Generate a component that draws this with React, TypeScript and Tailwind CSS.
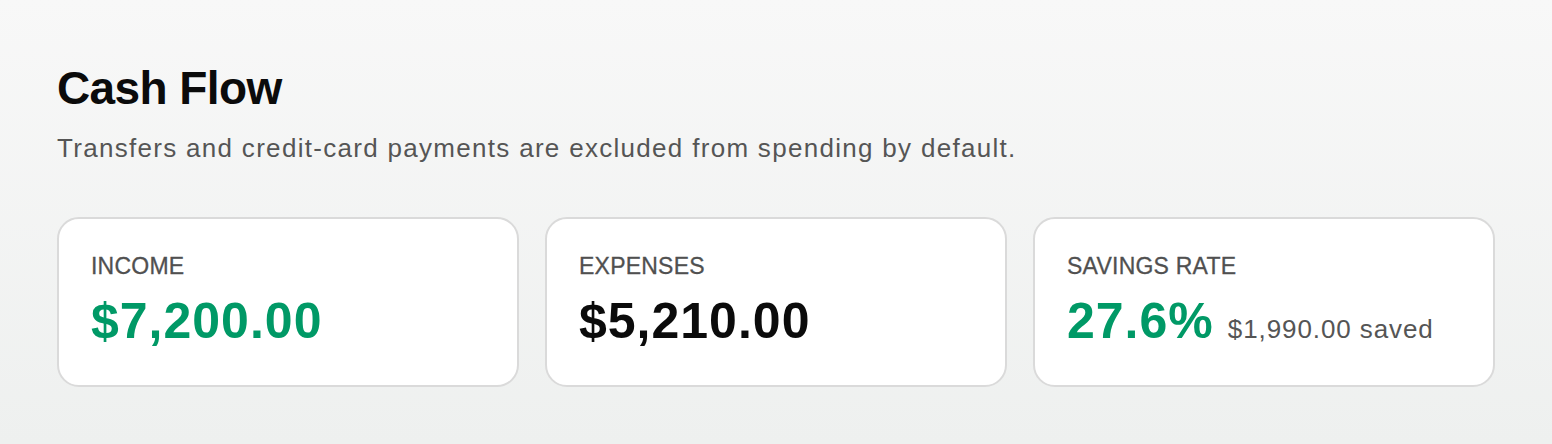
import React from "react";

const font = { fontFamily: "'Liberation Sans', Arial, sans-serif" };

type Stat = {
  label: string;
  value: string;
  tone: "green" | "dark";
  extra?: string;
};

const stats: Stat[] = [
  { label: "INCOME", value: "$7,200.00", tone: "green" },
  { label: "EXPENSES", value: "$5,210.00", tone: "dark" },
  { label: "SAVINGS RATE", value: "27.6%", tone: "green", extra: "$1,990.00 saved" },
];

const StatCard = ({ stat }: { stat: Stat }) => (
  <div className="bg-white border-2 border-[#dadada] rounded-[22px] h-[170px] px-[32px] pt-[33px]">
    <div className="text-[23px] leading-[28px] tracking-[0.01em] text-[#505050] [-webkit-text-stroke:0.3px_#505050]">
      {stat.label}
    </div>
    <div className="flex items-baseline gap-[14px] mt-[13px]">
      <span
        className={`text-[50px] leading-[56px] font-bold tracking-[0.02em] ${
          stat.tone === "green" ? "text-[#009966]" : "text-[#0b0b0b]"
        }`}
      >
        {stat.value}
      </span>
      {stat.extra && (
        <span className="text-[26px] leading-[32px] tracking-[0.035em] text-[#555555]">{stat.extra}</span>
      )}
    </div>
  </div>
);

export default function App() {
  return (
    <div
      className="w-full h-[444px] bg-gradient-to-b from-[#f8f8f8] to-[#eef0ef] px-[57px] pt-[61px]"
      style={font}
    >
      {/* header */}
      <h1 className="text-[46px] leading-[54px] font-bold tracking-[-0.6px] text-[#0b0b0b]">Cash Flow</h1>
      <p className="text-[26px] leading-[32px] tracking-[0.05em] text-[#555555] mt-[17px]">
        Transfers and credit-card payments are excluded from spending by default.
      </p>

      {/* stat cards */}
      <div className="grid grid-cols-3 gap-[26px] mt-[53px]">
        {stats.map((s) => (
          <StatCard key={s.label} stat={s} />
        ))}
      </div>
    </div>
  );
}
